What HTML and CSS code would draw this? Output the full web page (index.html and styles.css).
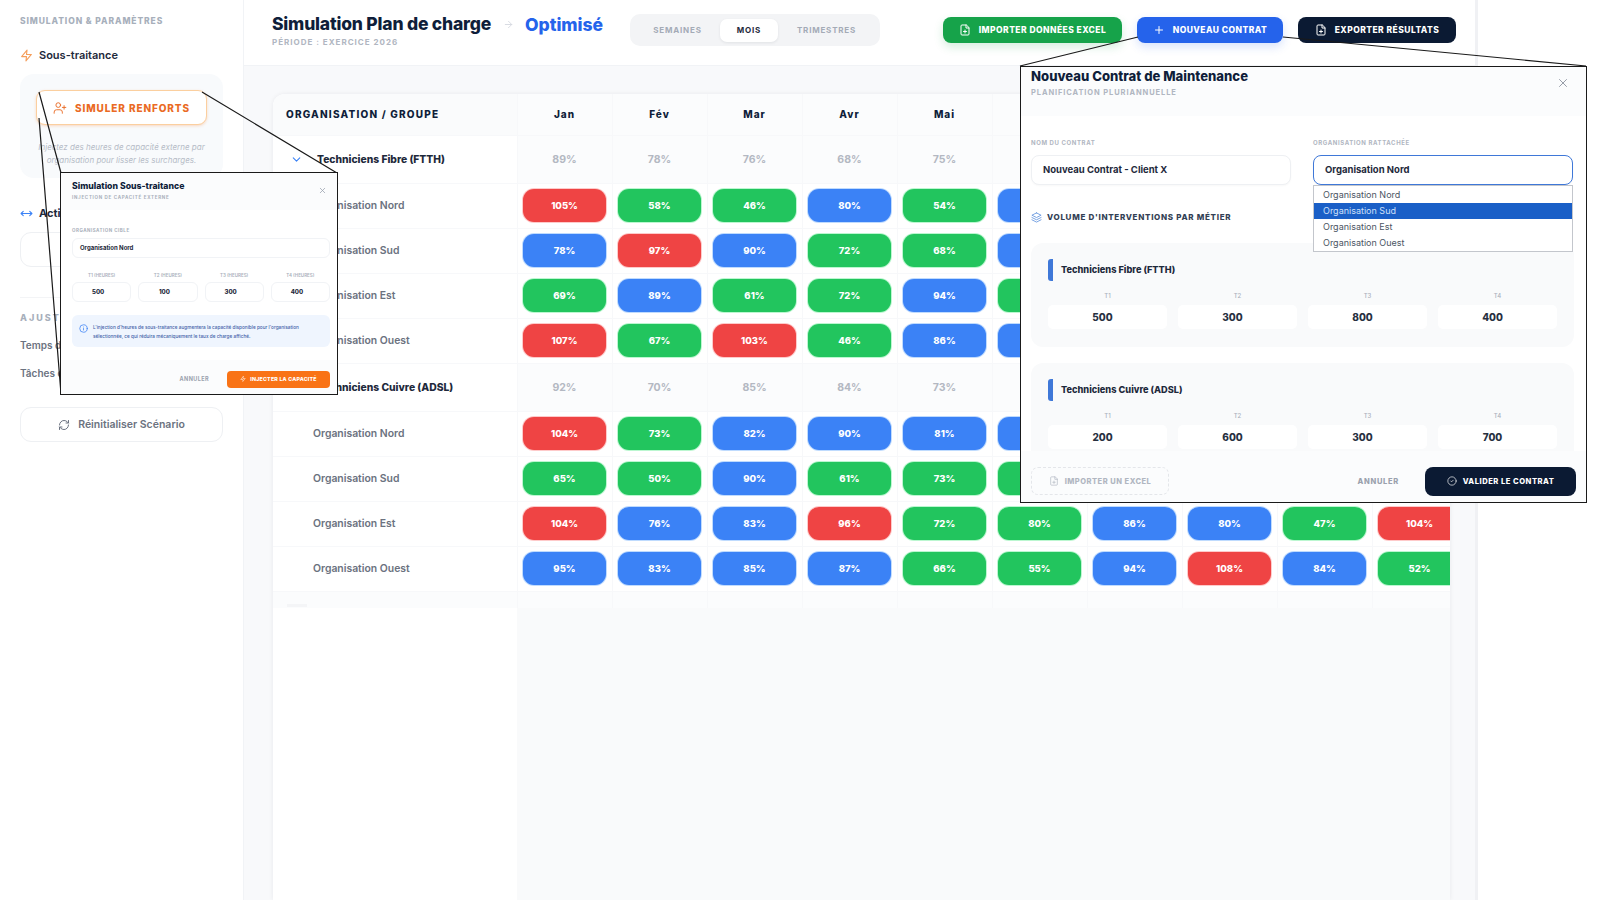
FILE: index.html

```html
<!DOCTYPE html>
<html lang="fr">
<head>
  <meta charset="UTF-8" />
  <meta name="viewport" content="width=device-width, initial-scale=1.0" />
  <title>Simulation Plan de charge</title>
  <link rel="stylesheet" href="styles.css">
</head>
<body>
  <svg class="sprite">
    <symbol id="i-zap" viewBox="0 0 24 24"><path d="M13 2 3 14h9l-1 8 10-12h-9l1-8z"/></symbol>
    <symbol id="i-user-plus" viewBox="0 0 24 24"><path d="M16 21v-2a4 4 0 0 0-4-4H6a4 4 0 0 0-4 4v2"/><circle cx="9" cy="7" r="4"/><path d="M19 8v6M22 11h-6"/></symbol>
    <symbol id="i-file-plus" viewBox="0 0 24 24"><path d="M14 2H6a2 2 0 0 0-2 2v16a2 2 0 0 0 2 2h12a2 2 0 0 0 2-2V8z"/><path d="M14 2v6h6M12 18v-6M9 15h6"/></symbol>
    <symbol id="i-plus" viewBox="0 0 24 24"><path d="M12 5v14M5 12h14"/></symbol>
    <symbol id="i-x" viewBox="0 0 24 24"><path d="M18 6 6 18M6 6l12 12"/></symbol>
    <symbol id="i-arrow" viewBox="0 0 24 24"><path d="M5 12h14M12 5l7 7-7 7"/></symbol>
    <symbol id="i-move" viewBox="0 0 24 24"><path d="M2 12h20M6 8l-4 4 4 4M18 8l4 4-4 4"/></symbol>
    <symbol id="i-chevron" viewBox="0 0 24 24"><path d="m6 9 6 6 6-6"/></symbol>
    <symbol id="i-refresh" viewBox="0 0 24 24"><path d="M3 12a9 9 0 0 1 9-9 9.75 9.75 0 0 1 6.74 2.74L21 8"/><path d="M21 3v5h-5"/><path d="M21 12a9 9 0 0 1-9 9 9.75 9.75 0 0 1-6.74-2.74L3 16"/><path d="M8 16H3v5"/></symbol>
    <symbol id="i-layers" viewBox="0 0 24 24"><path d="M12 2 2 7l10 5 10-5-10-5z"/><path d="m2 17 10 5 10-5M2 12l10 5 10-5"/></symbol>
    <symbol id="i-check" viewBox="0 0 24 24"><circle cx="12" cy="12" r="10"/><path d="m9 12 2 2 4-4"/></symbol>
    <symbol id="i-info" viewBox="0 0 24 24"><circle cx="12" cy="12" r="10"/><path d="M12 16v-4M12 8h.01"/></symbol>
  </svg>

  <div class="app">
    <aside class="sidebar">
      <div class="side-title">SIMULATION &amp; PARAMÈTRES</div>
      <div class="side-head"><svg class="icon icon-orange"><use href="#i-zap"/></svg>Sous-traitance</div>
      <div class="side-card">
        <button class="btn-renforts"><svg class="icon"><use href="#i-user-plus"/></svg>SIMULER RENFORTS</button>
        <p class="side-note">Injectez des heures de capacité externe par organisation pour lisser les surcharges.</p>
      </div>
      <div class="side-head side-head-actions"><svg class="icon icon-blue"><use href="#i-move"/></svg>Actions</div>
      <button class="side-btn side-btn-dark">Appliquer les actions</button>
      <hr class="side-sep">
      <div class="side-title side-title-wide">AJUSTEMENTS</div>
      <div class="side-line">Temps de trajet</div>
      <div class="side-line">Tâches de support</div>
      <button class="side-btn side-btn-reset"><svg class="icon"><use href="#i-refresh"/></svg>Réinitialiser Scénario</button>
    </aside>

    <main class="main">
      <header class="topbar">
        <div class="title-block">
          <div class="title-line">
            <h1>Simulation Plan de charge</h1>
            <svg class="icon title-arrow"><use href="#i-arrow"/></svg>
            <span class="title-state">Optimisé</span>
          </div>
          <div class="period">PÉRIODE : EXERCICE 2026</div>
        </div>
        <div class="tabs">
          <span class="tab tab-weeks">SEMAINES</span>
          <span class="tab tab-active">MOIS</span>
          <span class="tab tab-quarters">TRIMESTRES</span>
        </div>
        <div class="actions">
          <button class="btn btn-green"><svg class="icon"><use href="#i-file-plus"/></svg>IMPORTER DONNÉES EXCEL</button>
          <button class="btn btn-blue"><svg class="icon"><use href="#i-plus"/></svg>NOUVEAU CONTRAT</button>
          <button class="btn btn-dark"><svg class="icon"><use href="#i-file-plus"/></svg>EXPORTER RÉSULTATS</button>
        </div>
      </header>

      <section class="card">
        <table class="grid">
          <thead>
            <tr>
              <th class="org-col">ORGANISATION / GROUPE</th>
              <th>Jan</th><th>Fév</th><th>Mar</th><th>Avr</th><th>Mai</th><th>Jun</th><th>Jul</th><th>Aoû</th><th>Sep</th><th>Oct</th>
            </tr>
          </thead>
          <tbody>
            <tr class="group">
              <td class="org-col"><svg class="icon chevron"><use href="#i-chevron"/></svg>Techniciens Fibre (FTTH)</td>
              <td>89%</td><td>78%</td><td>76%</td><td>68%</td><td>75%</td><td>82%</td><td>79%</td><td>84%</td><td>77%</td><td>81%</td>
            </tr>
            <tr>
              <td class="org-col">Organisation Nord</td>
              <td><span class="pill red">105%</span></td><td><span class="pill green">58%</span></td><td><span class="pill green">46%</span></td><td><span class="pill blue">80%</span></td><td><span class="pill green">54%</span></td><td><span class="pill blue">88%</span></td><td><span class="pill green">62%</span></td><td><span class="pill blue">91%</span></td><td><span class="pill green">70%</span></td><td><span class="pill blue">83%</span></td>
            </tr>
            <tr>
              <td class="org-col">Organisation Sud</td>
              <td><span class="pill blue">78%</span></td><td><span class="pill red">97%</span></td><td><span class="pill blue">90%</span></td><td><span class="pill green">72%</span></td><td><span class="pill green">68%</span></td><td><span class="pill blue">85%</span></td><td><span class="pill green">59%</span></td><td><span class="pill blue">79%</span></td><td><span class="pill red">99%</span></td><td><span class="pill green">64%</span></td>
            </tr>
            <tr>
              <td class="org-col">Organisation Est</td>
              <td><span class="pill green">69%</span></td><td><span class="pill blue">89%</span></td><td><span class="pill green">61%</span></td><td><span class="pill green">72%</span></td><td><span class="pill blue">94%</span></td><td><span class="pill green">74%</span></td><td><span class="pill blue">86%</span></td><td><span class="pill green">55%</span></td><td><span class="pill blue">92%</span></td><td><span class="pill green">67%</span></td>
            </tr>
            <tr>
              <td class="org-col">Organisation Ouest</td>
              <td><span class="pill red">107%</span></td><td><span class="pill green">67%</span></td><td><span class="pill red">103%</span></td><td><span class="pill green">46%</span></td><td><span class="pill blue">86%</span></td><td><span class="pill blue">90%</span></td><td><span class="pill green">71%</span></td><td><span class="pill red">101%</span></td><td><span class="pill blue">81%</span></td><td><span class="pill green">60%</span></td>
            </tr>
            <tr class="group">
              <td class="org-col"><svg class="icon chevron"><use href="#i-chevron"/></svg>Techniciens Cuivre (ADSL)</td>
              <td>92%</td><td>70%</td><td>85%</td><td>84%</td><td>73%</td><td>76%</td><td>88%</td><td>90%</td><td>74%</td><td>83%</td>
            </tr>
            <tr>
              <td class="org-col">Organisation Nord</td>
              <td><span class="pill red">104%</span></td><td><span class="pill green">73%</span></td><td><span class="pill blue">82%</span></td><td><span class="pill blue">90%</span></td><td><span class="pill blue">81%</span></td><td><span class="pill blue">84%</span></td><td><span class="pill green">69%</span></td><td><span class="pill blue">93%</span></td><td><span class="pill green">58%</span></td><td><span class="pill blue">87%</span></td>
            </tr>
            <tr>
              <td class="org-col">Organisation Sud</td>
              <td><span class="pill green">65%</span></td><td><span class="pill green">50%</span></td><td><span class="pill blue">90%</span></td><td><span class="pill green">61%</span></td><td><span class="pill green">73%</span></td><td><span class="pill green">57%</span></td><td><span class="pill blue">83%</span></td><td><span class="pill green">66%</span></td><td><span class="pill red">98%</span></td><td><span class="pill blue">79%</span></td>
            </tr>
            <tr>
              <td class="org-col">Organisation Est</td>
              <td><span class="pill red">104%</span></td><td><span class="pill blue">76%</span></td><td><span class="pill blue">83%</span></td><td><span class="pill red">96%</span></td><td><span class="pill green">72%</span></td><td><span class="pill green">80%</span></td><td><span class="pill blue">86%</span></td><td><span class="pill blue">80%</span></td><td><span class="pill green">47%</span></td><td><span class="pill red">104%</span></td>
            </tr>
            <tr>
              <td class="org-col">Organisation Ouest</td>
              <td><span class="pill blue">95%</span></td><td><span class="pill blue">83%</span></td><td><span class="pill blue">85%</span></td><td><span class="pill blue">87%</span></td><td><span class="pill green">66%</span></td><td><span class="pill green">55%</span></td><td><span class="pill blue">94%</span></td><td><span class="pill red">108%</span></td><td><span class="pill blue">84%</span></td><td><span class="pill green">52%</span></td>
            </tr>
            <tr class="tail">
              <td class="org-col"><span class="tail-mark"></span></td>
              <td></td><td></td><td></td><td></td><td></td><td></td><td></td><td></td><td></td><td></td>
            </tr>
          </tbody>
        </table>
      </section>
    </main>
  </div>

  <!-- callout lines from the trigger buttons to the two dialogs -->
  <svg class="callouts" viewBox="0 0 1600 900">
    <path d="M39 92 61 173M39 118 61 394M202 92 337 173M1138 37 1020 66M1283 37 1586 66"/>
  </svg>

  <div class="modal modal-sim">
    <div class="sim-head">
      <div>
        <div class="sim-title">Simulation Sous-traitance</div>
        <div class="sim-sub">INJECTION DE CAPACITÉ EXTERNE</div>
      </div>
      <svg class="icon sim-close"><use href="#i-x"/></svg>
    </div>
    <div class="sim-body">
      <div class="sim-label">ORGANISATION CIBLE</div>
      <div class="sim-input sim-select">Organisation Nord</div>
      <div class="sim-quarters">
        <div><div class="sim-qlabel">T1 (HEURES)</div><div class="sim-input sim-num">500</div></div>
        <div><div class="sim-qlabel">T2 (HEURES)</div><div class="sim-input sim-num">100</div></div>
        <div><div class="sim-qlabel">T3 (HEURES)</div><div class="sim-input sim-num">300</div></div>
        <div><div class="sim-qlabel">T4 (HEURES)</div><div class="sim-input sim-num">400</div></div>
      </div>
      <div class="sim-info">
        <svg class="icon"><use href="#i-info"/></svg>
        <p>L'injection d'heures de sous-traitance augmentera la capacité disponible pour l'organisation sélectionnée, ce qui réduira mécaniquement le taux de charge affiché.</p>
      </div>
    </div>
    <div class="sim-foot">
      <span class="sim-cancel">ANNULER</span>
      <button class="sim-submit"><svg class="icon"><use href="#i-zap"/></svg>INJECTER LA CAPACITÉ</button>
    </div>
  </div>

  <div class="modal modal-contract">
    <div class="mc-head">
      <div>
        <div class="mc-title">Nouveau Contrat de Maintenance</div>
        <div class="mc-sub">PLANIFICATION PLURIANNUELLE</div>
      </div>
      <svg class="icon mc-close"><use href="#i-x"/></svg>
    </div>
    <div class="mc-body">
      <div class="mc-fields">
        <div>
          <div class="mc-label">NOM DU CONTRAT</div>
          <div class="mc-input">Nouveau Contrat - Client X</div>
        </div>
        <div class="mc-select-wrap">
          <div class="mc-label">ORGANISATION RATTACHÉE</div>
          <div class="mc-input mc-focus">Organisation Nord</div>
          <ul class="dropdown">
            <li>Organisation Nord</li>
            <li class="selected">Organisation Sud</li>
            <li>Organisation Est</li>
            <li>Organisation Ouest</li>
          </ul>
        </div>
      </div>
      <div class="mc-section"><svg class="icon"><use href="#i-layers"/></svg>VOLUME D'INTERVENTIONS PAR MÉTIER</div>
      <div class="trade">
        <div class="trade-name">Techniciens Fibre (FTTH)</div>
        <div class="trade-grid">
          <div><div class="trade-q">T1</div><div class="trade-val">500</div></div>
          <div><div class="trade-q">T2</div><div class="trade-val">300</div></div>
          <div><div class="trade-q">T3</div><div class="trade-val">800</div></div>
          <div><div class="trade-q">T4</div><div class="trade-val">400</div></div>
        </div>
      </div>
      <div class="trade">
        <div class="trade-name">Techniciens Cuivre (ADSL)</div>
        <div class="trade-grid">
          <div><div class="trade-q">T1</div><div class="trade-val">200</div></div>
          <div><div class="trade-q">T2</div><div class="trade-val">600</div></div>
          <div><div class="trade-q">T3</div><div class="trade-val">300</div></div>
          <div><div class="trade-q">T4</div><div class="trade-val">700</div></div>
        </div>
      </div>
    </div>
    <div class="mc-foot">
      <button class="mc-import"><svg class="icon"><use href="#i-file-plus"/></svg>IMPORTER UN EXCEL</button>
      <span class="mc-cancel">ANNULER</span>
      <button class="mc-submit"><svg class="icon"><use href="#i-check"/></svg>VALIDER LE CONTRAT</button>
    </div>
  </div>
</body>
</html>
```

FILE: styles.css

```css
* {
  box-sizing: border-box;
}
html, body {
  height: 100%;
}
body {
  font-family: Inter, "Liberation Sans", sans-serif;
  background-color: #fff;
  margin: 0;
  color: #0f172a;
  overflow: hidden;
}
button {
  font-family: inherit;
  cursor: pointer;
}
.sprite {
  display: none;
}
.icon {
  width: 12px;
  height: 12px;
  flex: none;
  fill: none;
  stroke: currentColor;
  stroke-width: 2;
  stroke-linecap: round;
  stroke-linejoin: round;
}
.icon-orange {
  color: #f59e5b;
  width: 13px;
  height: 13px;
}
.icon-blue {
  color: #3b82f6;
  width: 13px;
  height: 13px;
}
.app {
  display: flex;
  width: 1478px;
  height: 900px;
}

/* sidebar */
.sidebar {
  width: 244px;
  flex: none;
  padding: 16px 20px 0 20px;
  border-right: 1px solid #f1f3f6;
  background-color: #fff;
}
.side-title {
  font-size: 8.5px;
  font-weight: 800;
  letter-spacing: 0.9px;
  color: #a7afbb;
  line-height: 10px;
}
.side-title-wide {
  letter-spacing: 2px;
  margin-top: 15px;
  font-size: 9px;
}
.side-head {
  display: flex;
  align-items: center;
  gap: 6px;
  margin-top: 22px;
  height: 14px;
  font-size: 11px;
  font-weight: 600;
  color: #1e293b;
}
.side-head-actions {
  margin-top: 28px;
  font-weight: 700;
}
.side-card {
  margin-top: 12px;
  height: 104px;
  padding: 16px;
  border-radius: 14px;
  background-color: #f8fafc;
}
.btn-renforts {
  display: flex;
  align-items: center;
  justify-content: center;
  gap: 8px;
  width: 100%;
  height: 35px;
  border: 1px solid #fbcf9f;
  border-radius: 9px;
  background-color: #fff;
  box-shadow: 0 1px 3px rgba(249, 115, 22, 0.25);
  color: #ea6a24;
  font-size: 10px;
  font-weight: 800;
  letter-spacing: 0.9px;
}
.btn-renforts .icon {
  width: 14px;
  height: 14px;
  stroke-width: 1.6;
}
.side-note {
  margin: 16px -8px 0;
  font-size: 8px;
  font-style: italic;
  line-height: 13px;
  text-align: center;
  color: #b6bcc7;
}
.side-btn {
  display: flex;
  align-items: center;
  justify-content: center;
  gap: 8px;
  width: 100%;
  height: 35px;
  border: 1px solid #eef0f3;
  border-radius: 11px;
  background-color: #fff;
  font-size: 10.5px;
  font-weight: 600;
  color: #6b7280;
}
.side-btn-dark {
  margin-top: 12px;
}
.side-btn-reset {
  margin-top: 25px;
}
.side-sep {
  border: 0;
  border-top: 1px solid #f3f4f6;
  margin: 30px 0 0;
}
.side-line {
  margin-top: 13px;
  height: 15px;
  font-size: 10px;
  font-weight: 600;
  color: #6b7280;
}
.side-title + .side-line {
  margin-top: 16px;
}

/* main column */
.main {
  flex: 1;
  min-width: 0;
  background-color: #f8f9fb;
  border-right: 3px solid #f0f1f4;
  overflow: hidden;
}
.topbar {
  display: flex;
  align-items: center;
  height: 66px;
  padding: 0 0 5px 28px;
  background-color: #fff;
  border-bottom: 1px solid #f1f3f6;
}
.title-block {
  width: 358px;
}
.title-line {
  display: flex;
  align-items: center;
}
h1 {
  margin: 0;
  font-size: 17.5px;
  font-weight: 800;
  letter-spacing: -0.2px;
  line-height: 22px;
  color: #0f1e3a;
}
.title-arrow {
  margin: 0 11px 0 12px;
  width: 11px;
  height: 11px;
  color: #d5d9e0;
}
.title-state {
  font-size: 17.5px;
  font-weight: 800;
  color: #2563eb;
}
.period {
  margin-top: 2px;
  font-size: 8px;
  font-weight: 700;
  letter-spacing: 1px;
  color: #b0b6c1;
}
.tabs {
  display: flex;
  align-items: center;
  width: 250px;
  height: 32px;
  padding: 0 5px;
  border-radius: 10px;
  background-color: #f3f4f6;
}
.tab {
  font-size: 8px;
  font-weight: 700;
  letter-spacing: 0.8px;
  color: #a4abb6;
  text-align: center;
}
.tab-weeks {
  width: 85px;
}
.tab-active {
  width: 58px;
  height: 23px;
  line-height: 23px;
  border-radius: 7px;
  background-color: #fff;
  box-shadow: 0 1px 3px rgba(15, 23, 42, 0.08);
  color: #1e293b;
}
.tab-quarters {
  flex: 1;
}
.actions {
  display: flex;
  gap: 15px;
  margin-left: 63px;
}
.btn {
  display: flex;
  align-items: center;
  justify-content: center;
  gap: 8px;
  height: 26px;
  border: 0;
  border-radius: 8px;
  color: #fff;
  font-size: 8.5px;
  font-weight: 800;
  letter-spacing: 0.45px;
  white-space: nowrap;
}
.btn-green {
  width: 179px;
  background-color: #16a34a;
  box-shadow: 0 4px 10px rgba(22, 163, 74, 0.18);
}
.btn-blue {
  width: 146px;
  background-color: #2563eb;
  box-shadow: 0 4px 10px rgba(37, 99, 235, 0.18);
}
.btn-dark {
  width: 158px;
  background-color: #0b1a33;
}

/* load table */
.card {
  width: 1177px;
  height: 806px;
  margin: 28px 0 0 29px;
  overflow: hidden;
  border-radius: 12px 0 0 0;
  background: linear-gradient(90deg, #fff 244px, #f9fafb 244px);
  box-shadow: 0 0 5px rgba(15, 23, 42, 0.07);
}
.grid {
  width: 1194px;
  table-layout: fixed;
  border-collapse: collapse;
}
.grid th, .grid td {
  width: 95px;
  padding: 0;
  border-right: 1px solid #f7f8fa;
  border-bottom: 1px solid #f7f8fa;
  text-align: center;
  background-color: #fff;
}
.grid th {
  height: 41px;
  font-size: 10px;
  font-weight: 800;
  letter-spacing: 1px;
  color: #0f1e3a;
  background-color: #fbfcfd;
}
.grid td {
  height: 45px;
  font-size: 10.5px;
  font-weight: 700;
  color: #b3b8c2;
}
.grid .org-col {
  width: 244px;
  text-align: left;
  background-color: #fff;
}
.grid th.org-col {
  padding-left: 13px;
  letter-spacing: 1.2px;
  background-color: #fafbfc;
}
.grid td.org-col {
  padding-left: 40px;
  font-size: 10.4px;
  font-weight: 600;
  color: #6b7280;
}
.group td {
  height: 48px;
  background-color: #fbfcfd;
}
.grid .group td.org-col {
  padding-left: 17px;
  font-size: 10.3px;
  font-weight: 800;
  color: #1e293b;
}
.chevron {
  width: 13px;
  height: 13px;
  margin-right: 14px;
  vertical-align: -3px;
  color: #3b82f6;
}
.grid .tail td {
  height: 17px;
  border-bottom: 0;
  background-color: #fbfcfd;
}
.tail-mark {
  display: block;
  width: 20px;
  height: 3px;
  margin: 12px 0 0 -26px;
  background-color: #f4f5f7;
}
.pill {
  display: block;
  width: 83px;
  height: 33px;
  margin: 0 auto;
  border-radius: 11px;
  font-size: 9.5px;
  font-weight: 800;
  line-height: 33px;
  color: #fff;
}
.pill.red {
  background-color: #ef4444;
  box-shadow: 0 0 0 1px #fecaca;
}
.pill.green {
  background-color: #22c55e;
  box-shadow: 0 0 0 1px #bbf7d0;
}
.pill.blue {
  background-color: #3b82f6;
  box-shadow: 0 0 0 1px #bfdbfe;
}

/* callouts and dialogs lie over the page */
.callouts {
  position: absolute;
  top: 0;
  left: 0;
  width: 1600px;
  height: 900px;
  pointer-events: none;
}
.callouts path {
  fill: none;
  stroke: #1a1a1a;
  stroke-width: 1.2;
}
.modal {
  position: absolute;
  display: flex;
  flex-direction: column;
  overflow: hidden;
  background-color: #fff;
  border: 1.5px solid #1a1a1a;
}

/* small simulation dialog */
.modal-sim {
  left: 60px;
  top: 172px;
  width: 278px;
  height: 223px;
}
.sim-head {
  display: flex;
  justify-content: space-between;
  flex: none;
  height: 37px;
  padding: 7px 10px 0 11px;
  background-color: #fbfcfd;
}
.sim-title {
  font-size: 8.7px;
  font-weight: 800;
  line-height: 12px;
  color: #0f1e3a;
}
.sim-sub {
  margin-top: 3px;
  font-size: 4.5px;
  font-weight: 700;
  letter-spacing: 0.7px;
  color: #a9b0bb;
}
.sim-close {
  width: 9px;
  height: 9px;
  margin-top: 6px;
  color: #9aa1ad;
}
.sim-body {
  flex: 1;
  padding: 18px 7px 0 11px;
}
.sim-label {
  font-size: 4.5px;
  font-weight: 700;
  letter-spacing: 0.5px;
  color: #a9b0bb;
}
.sim-input {
  height: 20px;
  border: 1px solid #f1f3f6;
  border-radius: 6px;
  background-color: #fff;
  font-size: 6px;
  font-weight: 800;
  line-height: 18px;
  text-align: center;
  color: #1e293b;
}
.sim-num {
  padding-right: 7px;
}
.sim-select {
  margin-top: 5px;
  padding-left: 7px;
  text-align: left;
  font-weight: 700;
}
.sim-quarters {
  display: grid;
  grid-template-columns: repeat(4, 1fr);
  gap: 7px;
  margin-top: 15px;
}
.sim-qlabel {
  margin-bottom: 4px;
  font-size: 4.5px;
  font-weight: 600;
  text-align: center;
  color: #a9b0bb;
}
.sim-info {
  display: flex;
  align-items: flex-start;
  gap: 5px;
  height: 32px;
  margin-top: 13px;
  padding: 8px 14px 0 7px;
  border-radius: 6px;
  background-color: #eff5fe;
}
.sim-info .icon {
  width: 9px;
  height: 9px;
  margin-top: 1px;
  color: #3b82f6;
}
.sim-info p {
  margin: 0;
  font-size: 4.7px;
  font-weight: 500;
  line-height: 8.5px;
  color: #3f5fa8;
}
.sim-foot {
  display: flex;
  align-items: center;
  justify-content: flex-end;
  flex: none;
  height: 34px;
  padding: 4px 7px 0 0;
  background-color: #fbfcfd;
}
.sim-cancel {
  margin-right: 18px;
  font-size: 5.5px;
  font-weight: 700;
  letter-spacing: 0.4px;
  color: #9aa1ad;
}
.sim-submit {
  display: flex;
  align-items: center;
  justify-content: center;
  gap: 4px;
  width: 103px;
  height: 17px;
  border: 0;
  border-radius: 4px;
  background-color: #f97316;
  color: #fff;
  font-size: 5.3px;
  font-weight: 800;
  letter-spacing: 0.2px;
}
.sim-submit .icon {
  width: 6px;
  height: 6px;
}

/* contract dialog */
.modal-contract {
  left: 1020px;
  top: 66px;
  width: 567px;
  height: 437px;
}
.mc-head {
  display: flex;
  justify-content: space-between;
  flex: none;
  height: 49px;
  padding: 1px 16px 0 10px;
  background-color: #fbfcfd;
}
.mc-title {
  font-size: 13.1px;
  font-weight: 800;
  line-height: 16px;
  color: #0f1e3a;
}
.mc-sub {
  margin-top: 4px;
  font-size: 7.5px;
  font-weight: 700;
  letter-spacing: 0.9px;
  color: #b0b6c1;
}
.mc-close {
  width: 14px;
  height: 14px;
  margin-top: 8px;
  color: #8f96a3;
  stroke-width: 1.6;
}
.mc-body {
  flex: 1;
  min-height: 0;
  overflow: hidden;
  padding: 23px 12px 0 10px;
}
.mc-fields {
  display: grid;
  grid-template-columns: 260px 260px;
  gap: 22px;
}
.mc-select-wrap {
  position: relative;
}
.mc-label {
  margin-bottom: 9px;
  font-size: 6px;
  font-weight: 700;
  letter-spacing: 0.6px;
  color: #b0b6c1;
}
.mc-input {
  height: 30px;
  padding-left: 11px;
  border: 1px solid #eef0f3;
  border-radius: 8px;
  background-color: #fff;
  box-shadow: 0 1px 2px rgba(15, 23, 42, 0.03);
  font-size: 9.5px;
  font-weight: 700;
  line-height: 28px;
  color: #1e293b;
}
.mc-focus {
  border: 1.5px solid #3f78d8;
}
.dropdown {
  position: absolute;
  z-index: 2;
  left: 0;
  right: 0;
  top: 46px;
  margin: 0;
  padding: 1px 0 0;
  list-style: none;
  border: 1px solid #c3c6cc;
  background-color: #fff;
  font-size: 9px;
  line-height: 16px;
  color: #4b5563;
}
.dropdown li {
  padding-left: 9px;
}
.dropdown .selected {
  background-color: #1a5fc7;
  color: #cfe0fa;
}
.mc-section {
  display: flex;
  align-items: center;
  gap: 5px;
  margin-top: 26px;
  height: 12px;
  font-size: 8px;
  font-weight: 800;
  letter-spacing: 0.7px;
  color: #334155;
}
.mc-section .icon {
  width: 11px;
  height: 11px;
  color: #6f9ce0;
}
.trade {
  height: 104px;
  margin-top: 20px;
  padding: 16px 17px 0;
  border-radius: 12px;
  background-color: #f9fafb;
}
.trade + .trade {
  margin-top: 16px;
}
.trade-name {
  height: 22px;
  padding-left: 8px;
  border-left: 5px solid #3f78d8;
  border-radius: 3px 0 0 3px;
  font-size: 9.2px;
  font-weight: 800;
  line-height: 22px;
  color: #1e293b;
}
.trade-grid {
  display: grid;
  grid-template-columns: repeat(4, 119px);
  gap: 11px;
  margin-top: 11px;
}
.trade-q {
  margin-bottom: 6px;
  font-size: 6px;
  font-weight: 500;
  text-align: center;
  color: #a9b0bb;
}
.trade-val {
  height: 24px;
  padding-right: 10px;
  border-radius: 5px;
  background-color: #fff;
  font-size: 10px;
  font-weight: 800;
  line-height: 24px;
  text-align: center;
  color: #27303f;
}
.mc-foot {
  display: flex;
  align-items: center;
  flex: none;
  height: 51px;
  padding: 9px 10px 0 10px;
  background-color: #fbfcfd;
}
.mc-import {
  display: flex;
  align-items: center;
  justify-content: center;
  gap: 6px;
  width: 138px;
  height: 28px;
  border: 1px dashed #e4e6ea;
  border-radius: 7px;
  background-color: transparent;
  color: #b0b6c1;
  font-size: 7.5px;
  font-weight: 800;
  letter-spacing: 0.5px;
}
.mc-import .icon {
  width: 10px;
  height: 10px;
  stroke-width: 1.6;
}
.mc-cancel {
  margin-left: auto;
  font-size: 7.5px;
  font-weight: 800;
  letter-spacing: 0.7px;
  color: #9aa1ad;
}
.mc-submit {
  display: flex;
  align-items: center;
  justify-content: center;
  gap: 6px;
  width: 151px;
  height: 29px;
  margin-left: 26px;
  border: 0;
  border-radius: 8px;
  background-color: #0b1a33;
  color: #fff;
  font-size: 7.6px;
  font-weight: 800;
  letter-spacing: 0.5px;
}
.mc-submit .icon {
  width: 10px;
  height: 10px;
  stroke-width: 1.6;
}
```
